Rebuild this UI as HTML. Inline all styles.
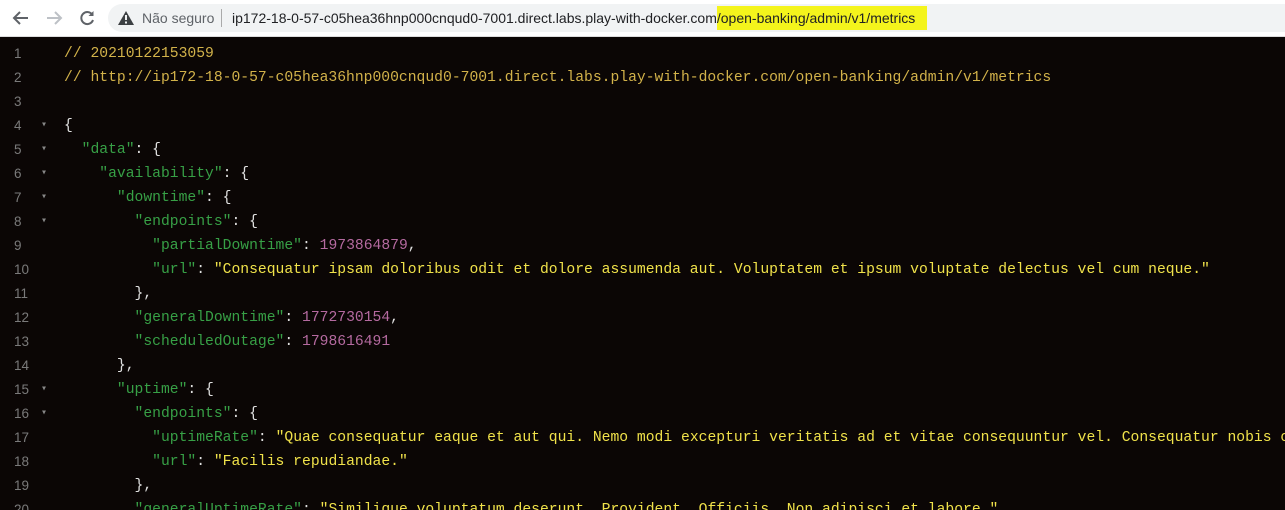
<!DOCTYPE html>
<html><head><meta charset="utf-8"><style>
html,body{margin:0;padding:0;width:1285px;height:510px;overflow:hidden;background:#0b0605;position:relative;}
.bar{position:absolute;left:0;top:0;width:1285px;height:36px;background:#fff;border-bottom:1px solid #ddd;font-family:"Liberation Sans",sans-serif;overflow:hidden;}
.pill{position:absolute;left:108px;top:4px;width:1177px;height:28px;border-radius:14px 0 0 14px;background:#f1f3f4;}
.t{position:absolute;top:10px;font-size:14px;color:#202124;white-space:nowrap;}
.hl{background:#f4f41c;}
.code{position:absolute;left:0;top:42px;width:1285px;height:468px;overflow:hidden;font-family:"Liberation Mono",monospace;font-size:14.7px;line-height:24px;color:#e0e0e0;white-space:pre;}
.ln{position:absolute;left:0;width:1285px;height:24px;}
.n{position:absolute;left:14px;color:#7a7a7a;font-family:"Liberation Sans",sans-serif;font-size:13.5px;}
.f{position:absolute;left:41px;color:#888;font-size:10px;}
.c{position:absolute;left:64px;}
.k{color:#37a046}.s{color:#f0e24a}.m{color:#b56aa0}.cm{color:#d2b24a}
</style></head><body>
<div class="bar">
<svg style="position:absolute;left:12px;top:10px" width="18" height="16" viewBox="0 0 18 16"><path d="M16 8H3M8 2L2 8l6 6" stroke="#5f6368" stroke-width="2" fill="none"/></svg>
<svg style="position:absolute;left:45px;top:10px" width="18" height="16" viewBox="0 0 18 16"><path d="M2 8h13M10 2l6 6-6 6" stroke="#bdc1c6" stroke-width="2" fill="none"/></svg>
<svg style="position:absolute;left:78px;top:9px" width="18" height="18" viewBox="0 0 18 18"><path d="M14.5 6A6 6 0 1 0 15 11" stroke="#5f6368" stroke-width="2" fill="none"/><path d="M15.5 2v5h-5z" fill="#5f6368"/></svg>
<div class="pill"></div>
<svg style="position:absolute;left:118px;top:11px" width="16" height="14" viewBox="0 0 16 14"><path d="M8 0L16 14H0z" fill="#3c4043"/><rect x="7" y="4" width="2" height="5" fill="#f1f3f4"/><rect x="7" y="10.5" width="2" height="2" fill="#f1f3f4"/></svg>
<div class="t" style="left:142px;color:#5f6368">Não seguro</div>
<div style="position:absolute;left:221px;top:9px;width:1px;height:18px;background:#aaa"></div>
<div class="t" style="left:232px">ip172-18-0-57-c05hea36hnp000cnqud0-7001.direct.labs.play-with-docker.com<span class="hl" style="padding:4px 12px 4px 0">/open-banking/admin/v1/metrics</span></div>
</div>
<div class="code">
<div class="ln" style="top:0"><span class="n">1</span><span class="c cm">// 20210122153059</span></div>
<div class="ln" style="top:24px"><span class="n">2</span><span class="c cm">// http://ip172-18-0-57-c05hea36hnp000cnqud0-7001.direct.labs.play-with-docker.com/open-banking/admin/v1/metrics</span></div>
<div class="ln" style="top:48px"><span class="n">3</span></div>
<div class="ln" style="top:72px"><span class="n">4</span><span class="f">▾</span><span class="c">{</span></div>
<div class="ln" style="top:96px"><span class="n">5</span><span class="f">▾</span><span class="c">  <span class="k">"data"</span>: {</span></div>
<div class="ln" style="top:120px"><span class="n">6</span><span class="f">▾</span><span class="c">    <span class="k">"availability"</span>: {</span></div>
<div class="ln" style="top:144px"><span class="n">7</span><span class="f">▾</span><span class="c">      <span class="k">"downtime"</span>: {</span></div>
<div class="ln" style="top:168px"><span class="n">8</span><span class="f">▾</span><span class="c">        <span class="k">"endpoints"</span>: {</span></div>
<div class="ln" style="top:192px"><span class="n">9</span><span class="c">          <span class="k">"partialDowntime"</span>: <span class="m">1973864879</span>,</span></div>
<div class="ln" style="top:216px"><span class="n">10</span><span class="c">          <span class="k">"url"</span>: <span class="s">"Consequatur ipsam doloribus odit et dolore assumenda aut. Voluptatem et ipsum voluptate delectus vel cum neque."</span></span></div>
<div class="ln" style="top:240px"><span class="n">11</span><span class="c">        },</span></div>
<div class="ln" style="top:264px"><span class="n">12</span><span class="c">        <span class="k">"generalDowntime"</span>: <span class="m">1772730154</span>,</span></div>
<div class="ln" style="top:288px"><span class="n">13</span><span class="c">        <span class="k">"scheduledOutage"</span>: <span class="m">1798616491</span></span></div>
<div class="ln" style="top:312px"><span class="n">14</span><span class="c">      },</span></div>
<div class="ln" style="top:336px"><span class="n">15</span><span class="f">▾</span><span class="c">      <span class="k">"uptime"</span>: {</span></div>
<div class="ln" style="top:360px"><span class="n">16</span><span class="f">▾</span><span class="c">        <span class="k">"endpoints"</span>: {</span></div>
<div class="ln" style="top:384px"><span class="n">17</span><span class="c">          <span class="k">"uptimeRate"</span>: <span class="s">"Quae consequatur eaque et aut qui. Nemo modi excepturi veritatis ad et vitae consequuntur vel. Consequatur nobis o</span></span></div>
<div class="ln" style="top:408px"><span class="n">18</span><span class="c">          <span class="k">"url"</span>: <span class="s">"Facilis repudiandae."</span></span></div>
<div class="ln" style="top:432px"><span class="n">19</span><span class="c">        },</span></div>
<div class="ln" style="top:456px"><span class="n">20</span><span class="c">        <span class="k">"generalUptimeRate"</span>: <span class="s">"Similique voluptatum deserunt. Provident. Officiis. Non adipisci et labore."</span></span></div>
</div>
</body></html>
